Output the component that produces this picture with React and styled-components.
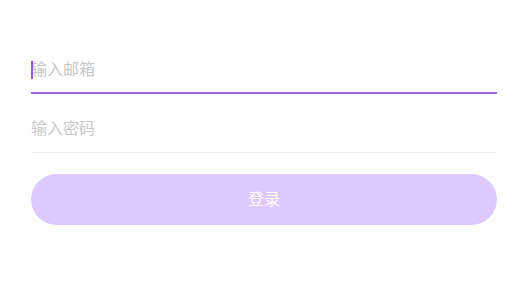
import React from 'react'
import styled, { createGlobalStyle } from 'styled-components'

const GlobalStyle = createGlobalStyle`
  body {
    margin: 0;
    background: #ffffff;
    font-family: "Noto Sans", "Noto Sans CJK SC", sans-serif;
  }
`

const Page = styled.div`
  padding: 47px 28px 0 31px;
  display: flex;
  flex-direction: column;
`

const Field = styled.input`
  display: block;
  width: 100%;
  box-sizing: border-box;
  height: 47px;
  padding: 0 0 2px;
  border: none;
  border-bottom: ${p => (p.$active ? '2px solid #9a63dc' : '1px solid #ececec')};
  outline: none;
  background: transparent;
  font-family: "Noto Sans", "Noto Sans CJK SC", sans-serif;
  font-size: 16px;
  color: #333;
  caret-color: #8e57d6;

  &::placeholder {
    color: #c8c8c8;
  }
`

const Caret = styled.span`
  position: absolute;
  left: 0;
  top: 14px;
  width: 1.5px;
  height: 18px;
  background: #8e57d6;
`

const FieldWrap = styled.div`
  position: relative;
`

const Gap = styled.div`
  height: ${p => p.$h}px;
`

const LoginButton = styled.button`
  height: 51px;
  padding: 0 0 4px;
  border: none;
  border-radius: 26px;
  background: #ddc9fd;
  color: #ffffff;
  font-family: "Noto Sans", "Noto Sans CJK SC", sans-serif;
  font-size: 16px;
  cursor: pointer;
`

export default function App() {
  return (
    <>
      <GlobalStyle />
      <Page>
        <FieldWrap>
          <Field $active placeholder="输入邮箱" />
          <Caret />
        </FieldWrap>
        <Gap $h={12} />
        <Field placeholder="输入密码" type="password" />
        <Gap $h={21} />
        <LoginButton>登录</LoginButton>
      </Page>
    </>
  )
}
